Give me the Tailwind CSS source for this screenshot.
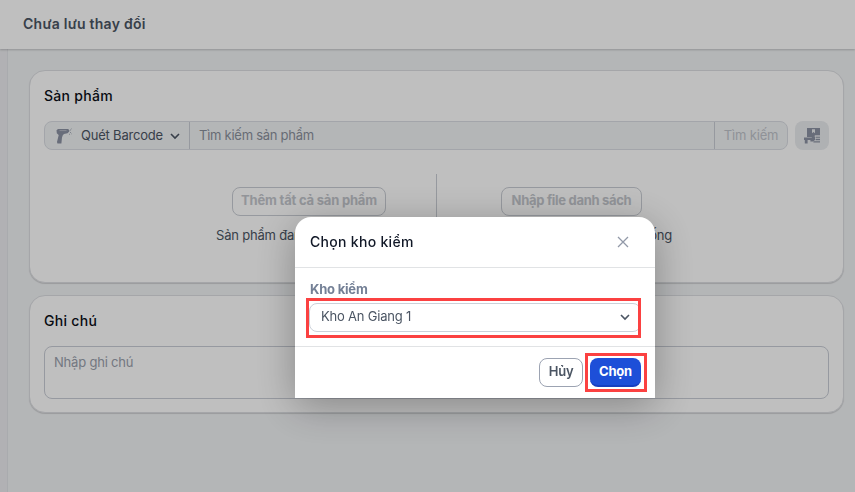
<!DOCTYPE html>
<html lang="vi">
<head>
  <meta charset="UTF-8">
  <title>Kiểm kho</title>
  <script src="https://cdn.jsdelivr.net/npm/@tailwindcss/browser@4"></script>
</head>
<body class="bg-[#f1f3f5] h-screen overflow-hidden font-['Inter','Noto_Sans',sans-serif] text-[13px] leading-5 tracking-[-0.2px] text-[#4b5563]">
  <div class="h-screen flex flex-col">
    <header class="h-[49px] shrink-0 bg-white flex items-center px-[23px] pb-px shadow-[0_1px_2px_rgba(0,0,0,0.2)] relative">
      <h1 class="text-sm font-semibold tracking-[0.25px] text-[#4b5563]">Chưa lưu thay đổi</h1>
    </header>

    <div class="flex flex-1">
      <aside class="w-2 bg-[#ecedf0] border-r border-[#e2e4e8]"></aside>

      <main class="flex-1 pl-[21px] pr-[11px] pt-[21px] space-y-3">
        <!-- Products -->
        <section class="h-[213px] bg-white rounded-2xl border border-[#dcdee2] shadow-[0_1px_1px_rgba(0,0,0,0.15)] px-[14px] pt-[15px]">
          <h2 class="text-sm font-medium tracking-[0.3px] text-[#0b0f18]">Sản phẩm</h2>
          <div class="mt-[15px] flex gap-[7px]">
            <div class="flex-1 h-[29px] flex rounded-lg border border-[#dadde3] bg-[#f1f3f5] overflow-hidden">
              <div class="w-[145px] shrink-0 flex items-center border-r border-[#c9cdd4] pl-[11px] pb-px">
                <svg class="w-4 h-4 mt-px" viewBox="0 0 16 16" fill="#8b92a3">
                  <path d="M.5 2.2 2 1h10l1.3 1v1.6L11.5 5.2 8 6 6.8 7.3 6 9.5 5.4 15.6H1.4L1 14l1.7-7L.8 5.2z"/>
                  <path d="M3.5 2.6h7" stroke="#c5c9d1" stroke-width=".7"/>
                  <path d="M14 1.6h1v1h-1zM15.2.4h.8v.8h-.8zM14 4h1v1h-1zM15.2 5.4h.8v.8h-.8zM13 5.8h1v1h-1z" fill="#a9aeba"/>
                </svg>
                <span class="ml-[9px]">Quét Barcode</span>
                <svg class="w-[10px] h-[10px] ml-[7px] mt-px" viewBox="0 0 10 10" fill="none" stroke="#4b5563" stroke-width="1.6"><path d="m1 3 4 4 4-4"/></svg>
              </div>
              <div class="flex-1 pl-[9px] pt-[3px] tracking-[-0.26px] text-[#8a909c]">Tìm kiếm sản phẩm</div>
              <button class="w-[73px] shrink-0 border-l border-[#c9cdd4] pb-px tracking-[-0.15px] text-[#bfc3ca]">Tìm kiếm</button>
            </div>
            <button class="w-[34px] h-[29px] rounded-lg bg-[#eaecef] flex items-center justify-center">
              <svg class="w-4 h-4" viewBox="0 0 16 16" fill="#8b92a3">
                <path d="M3 0h13v7.5h-5L9 9H3z"/>
                <path d="M8 1.2h3v4L9.5 4 8 5.2z" fill="#eaecef"/>
                <path d="M0 9.5h7.5L10 7.7l1 1V12l-2 1.4H6.4V12H3.6v3.6H.8V12H0z"/>
                <path d="M11.6 8.4H16v1.4h-4.4zM11.6 10.8H16v1.4h-4.4zM9.4 13.2H16v1.4H9.4z"/>
                <path d="M11 7.6h5v.8h-5z" fill="#eaecef"/>
              </svg>
            </button>
          </div>

          <div class="mt-[24px] h-[88px] flex">
            <div class="w-[392px] shrink-0 pt-[13px] pl-[172px]">
              <div class="ml-4 w-[154px] h-[29px] rounded-lg border border-[#c9cdd4] text-[#c3c6cc] font-bold text-center leading-[25px] whitespace-nowrap">Thêm tất cả sản phẩm</div>
              <p class="mt-[9px] whitespace-nowrap">Sản phẩm đang</p>
            </div>
            <div class="w-px bg-[#c9cdd4]"></div>
            <div class="flex-1 pl-[64px] pt-[13px]">
              <div class="w-[141px] h-[29px] rounded-lg border border-[#c9cdd4] text-[#c3c6cc] font-bold tracking-[-0.3px] text-center leading-[25px] whitespace-nowrap">Nhập file danh sách</div>
              <p class="mt-[9px] w-[171px] text-right whitespace-nowrap">thống</p>
            </div>
          </div>
        </section>

        <!-- Note -->
        <section class="h-[118px] bg-white rounded-2xl border border-[#dcdee2] shadow-[0_1px_1px_rgba(0,0,0,0.15)] px-[14px] pt-[15px]">
          <h2 class="text-sm font-medium tracking-[0.3px] text-[#0b0f18]">Ghi chú</h2>
          <div class="mt-[15px] h-[53px] rounded-lg border border-[#c9cdd6] px-[9px] pt-[5px] text-[#9aa0ac]">Nhập ghi chú</div>
        </section>
      </main>
    </div>
  </div>

  <!-- Warehouse dialog -->
  <div class="fixed inset-0 bg-black/25">
    <div class="absolute left-[295px] top-[217px] w-[360px] h-[181px] bg-white rounded-t-[16px] shadow-[0_8px_40px_rgba(0,0,0,0.3)] flex flex-col">
      <div class="h-[51px] shrink-0 border-b border-[#e1e3e5] flex items-center justify-between pl-[15px] pr-[26px]">
        <h3 class="text-sm font-medium tracking-[0.3px] text-[#111827]">Chọn kho kiểm</h3>
        <svg class="w-3 h-3" viewBox="0 0 12 12" fill="none" stroke="#9299a8" stroke-width="1.3"><path d="m1 1 10 10M11 1 1 11"/></svg>
      </div>
      <div class="h-[79px] shrink-0 border-b border-[#e1e3e5] px-[14px] pt-[11px]">
        <label class="block pl-px font-bold text-[#748096]">Kho kiểm</label>
        <div class="relative mt-1 h-[29px] rounded-lg border border-[#cbd1d9] flex items-center justify-between pl-[11px] pr-[10px] pb-0.5">
          <span class="-mt-px">Kho An Giang 1</span>
          <svg class="w-[10px] h-[10px] mt-px" viewBox="0 0 10 10" fill="none" stroke="#4b5563" stroke-width="1.6"><path d="m1 3 4 4 4-4"/></svg>
          <div class="absolute -left-[4px] -top-[6px] w-[335px] h-[40px] border-3 border-[#fb4141]"></div>
        </div>
      </div>
      <div class="flex-1 flex justify-end gap-[7px] pr-[14px] pt-[11px]">
        <button class="w-11 h-[29px] rounded-lg border border-[#9ca3b2] font-semibold pb-[3px]">Hủy</button>
        <div class="relative h-[29px]">
          <button class="w-[51px] h-[29px] rounded-lg bg-[#1d4fd8] border-b-2 border-[#173fc0] font-bold text-white pb-px">Chọn</button>
          <div class="absolute -left-[5px] -top-[5px] w-[62px] h-[39px] border-3 border-[#fb4141]"></div>
        </div>
      </div>
    </div>
  </div>
</body>
</html>
